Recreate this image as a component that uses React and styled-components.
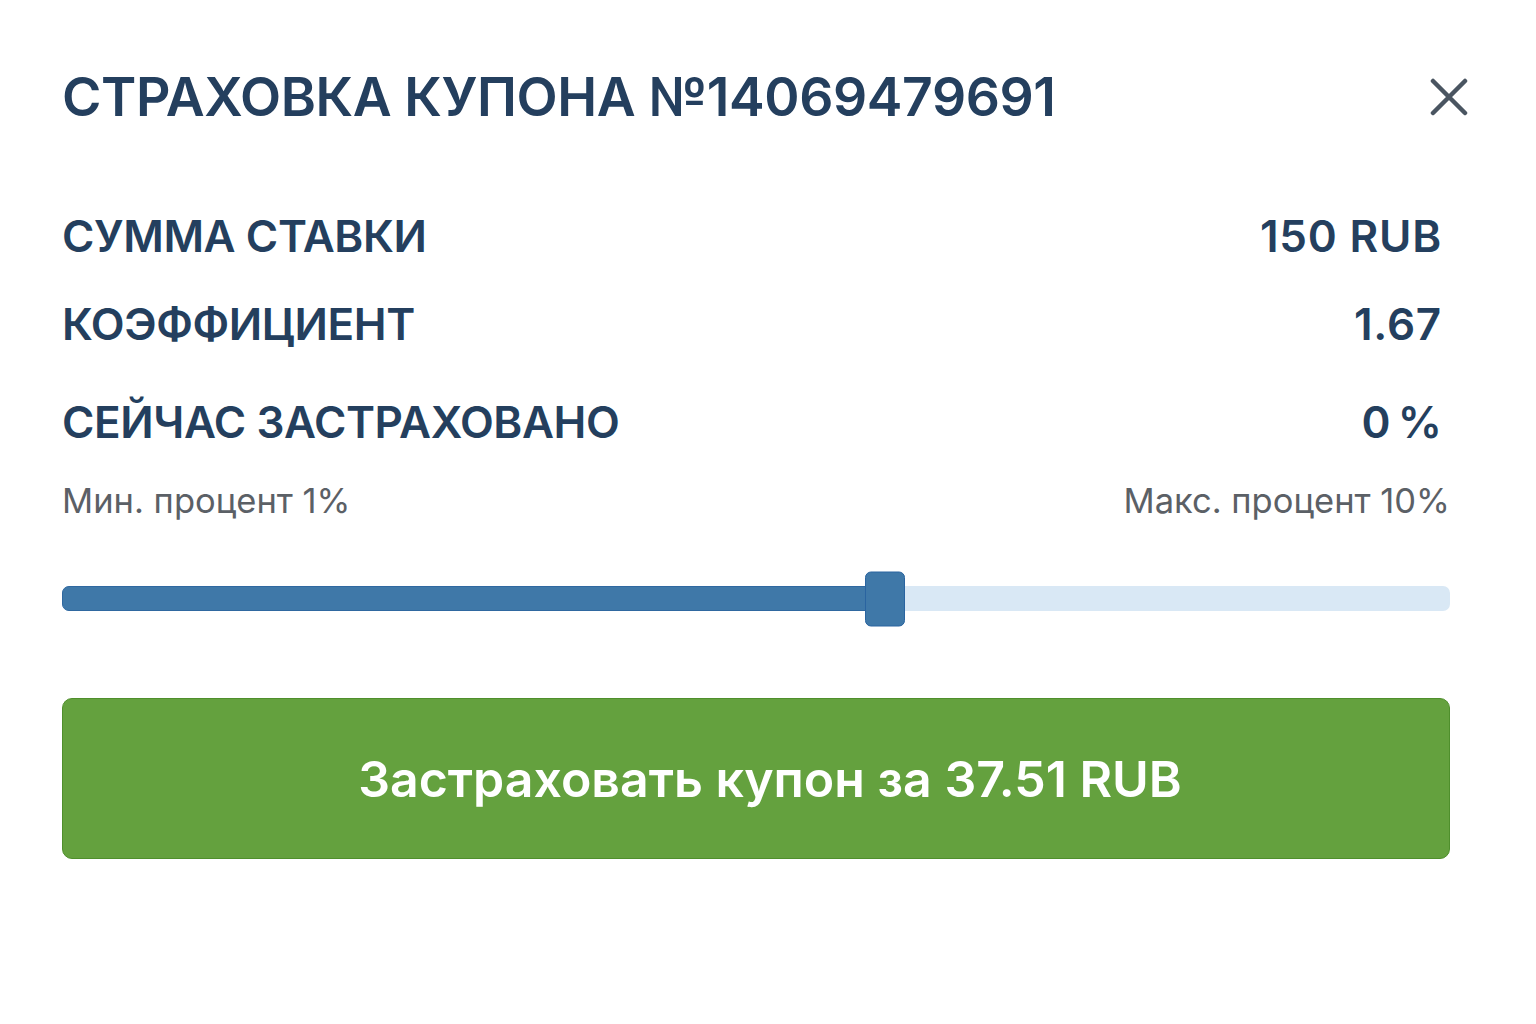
import React, { useState } from "react";
import styled, { createGlobalStyle } from "styled-components";

const GlobalStyle = createGlobalStyle`
  html, body {
    margin: 0;
    padding: 0;
    background: #ffffff;
  }
  body {
    font-family: Inter, "Noto Sans", "Liberation Sans", sans-serif;
  }
`;

const rows = [
  { label: "СУММА СТАВКИ", value: "150 RUB", gap: 0 },
  { label: "КОЭФФИЦИЕНТ", value: "1.67", gap: 0 },
  { label: "СЕЙЧАС ЗАСТРАХОВАНО", value: "0\u202F%", gap: 10 },
];

const App = () => {
  const [percent] = useState(59.3);

  return (
    <>
      <GlobalStyle />
      <Modal>
        <Header>
          <Title>СТРАХОВКА КУПОНА №14069479691</Title>
          <CloseButton aria-label="Закрыть">
            <svg width="38" height="38" viewBox="0 0 38 38">
              <path
                d="M3 3 L35 35 M35 3 L3 35"
                stroke="#4a5561"
                strokeWidth="4.5"
                strokeLinecap="round"
              />
            </svg>
          </CloseButton>
        </Header>

        <InfoList>
          {rows.map((row) => (
            <InfoRow key={row.label} $gap={row.gap}>
              <InfoLabel>{row.label}</InfoLabel>
              <InfoValue>{row.value}</InfoValue>
            </InfoRow>
          ))}
        </InfoList>

        <RangeLabels>
          <span>Мин. процент 1%</span>
          <span>Макс. процент 10%</span>
        </RangeLabels>

        <Slider>
          <Track>
            <Fill style={{ width: `${percent}%` }} />
            <Thumb style={{ left: `${percent}%` }} />
          </Track>
        </Slider>

        <SubmitButton>Застраховать купон за 37.51 RUB</SubmitButton>
      </Modal>
    </>
  );
};

export default App;

// STYLES

const Modal = styled.div`
  width: 1536px;
  height: 1024px;
  box-sizing: border-box;
  padding: 64px 86px 0 62px;
  background: #fff;
  color: #23405f;
`;

const Header = styled.div`
  display: flex;
  align-items: center;
  justify-content: space-between;
  height: 66px;
`;

const Title = styled.h1`
  margin: 0;
  font-size: 53.5px;
  font-weight: 600;
  letter-spacing: -0.4px;
  color: #243f5e;
  line-height: 1;
`;

const CloseButton = styled.button`
  display: flex;
  align-items: center;
  justify-content: center;
  margin-right: -18px;
  padding: 0;
  border: none;
  background: transparent;
  cursor: pointer;
`;

const InfoList = styled.div`
  display: flex;
  flex-direction: column;
  margin-top: 82px;
  padding-right: 8px;
`;

const InfoRow = styled.div`
  display: flex;
  align-items: center;
  justify-content: space-between;
  height: 88px;
  margin-top: ${(p) => p.$gap}px;
  &:first-child {
    margin-top: -20px;
  }
`;

const InfoLabel = styled.span`
  font-size: 44px;
  font-weight: 600;
  color: #243f5e;
  letter-spacing: -0.4px;
`;

const InfoValue = styled.span`
  font-size: 44px;
  font-weight: 600;
  color: #243f5e;
  letter-spacing: 0.8px;
`;

const RangeLabels = styled.div`
  display: flex;
  justify-content: space-between;
  margin-top: 14px;
  font-size: 34.5px;
  font-weight: 400;
  color: #5b6066;
`;

const Slider = styled.div`
  margin-top: 50px;
  padding: 15px 0;
`;

const Track = styled.div`
  position: relative;
  height: 25px;
  border-radius: 7px;
  background: #d9e8f5;
`;

const Fill = styled.div`
  height: 100%;
  border-radius: 7px 0 0 7px;
  background: #3f78a8;
  border: 1px solid #2f68a0;
  box-sizing: border-box;
`;

const Thumb = styled.div`
  position: absolute;
  top: 50%;
  width: 40px;
  height: 55px;
  transform: translate(-50%, -50%);
  border-radius: 6px;
  background: #3f78a8;
  border: 1px solid #2a64a0;
  box-sizing: border-box;
`;

const SubmitButton = styled.button`
  display: block;
  width: 100%;
  height: 161px;
  margin-top: 72px;
  padding: 0 0 0 28px;
  border: 1.5px solid #4f8f2c;
  border-radius: 10px;
  background: #64a13e;
  color: #fff;
  font-family: Inter, "Noto Sans", "Liberation Sans", sans-serif;
  font-size: 50px;
  font-weight: 600;
  cursor: pointer;
`;
